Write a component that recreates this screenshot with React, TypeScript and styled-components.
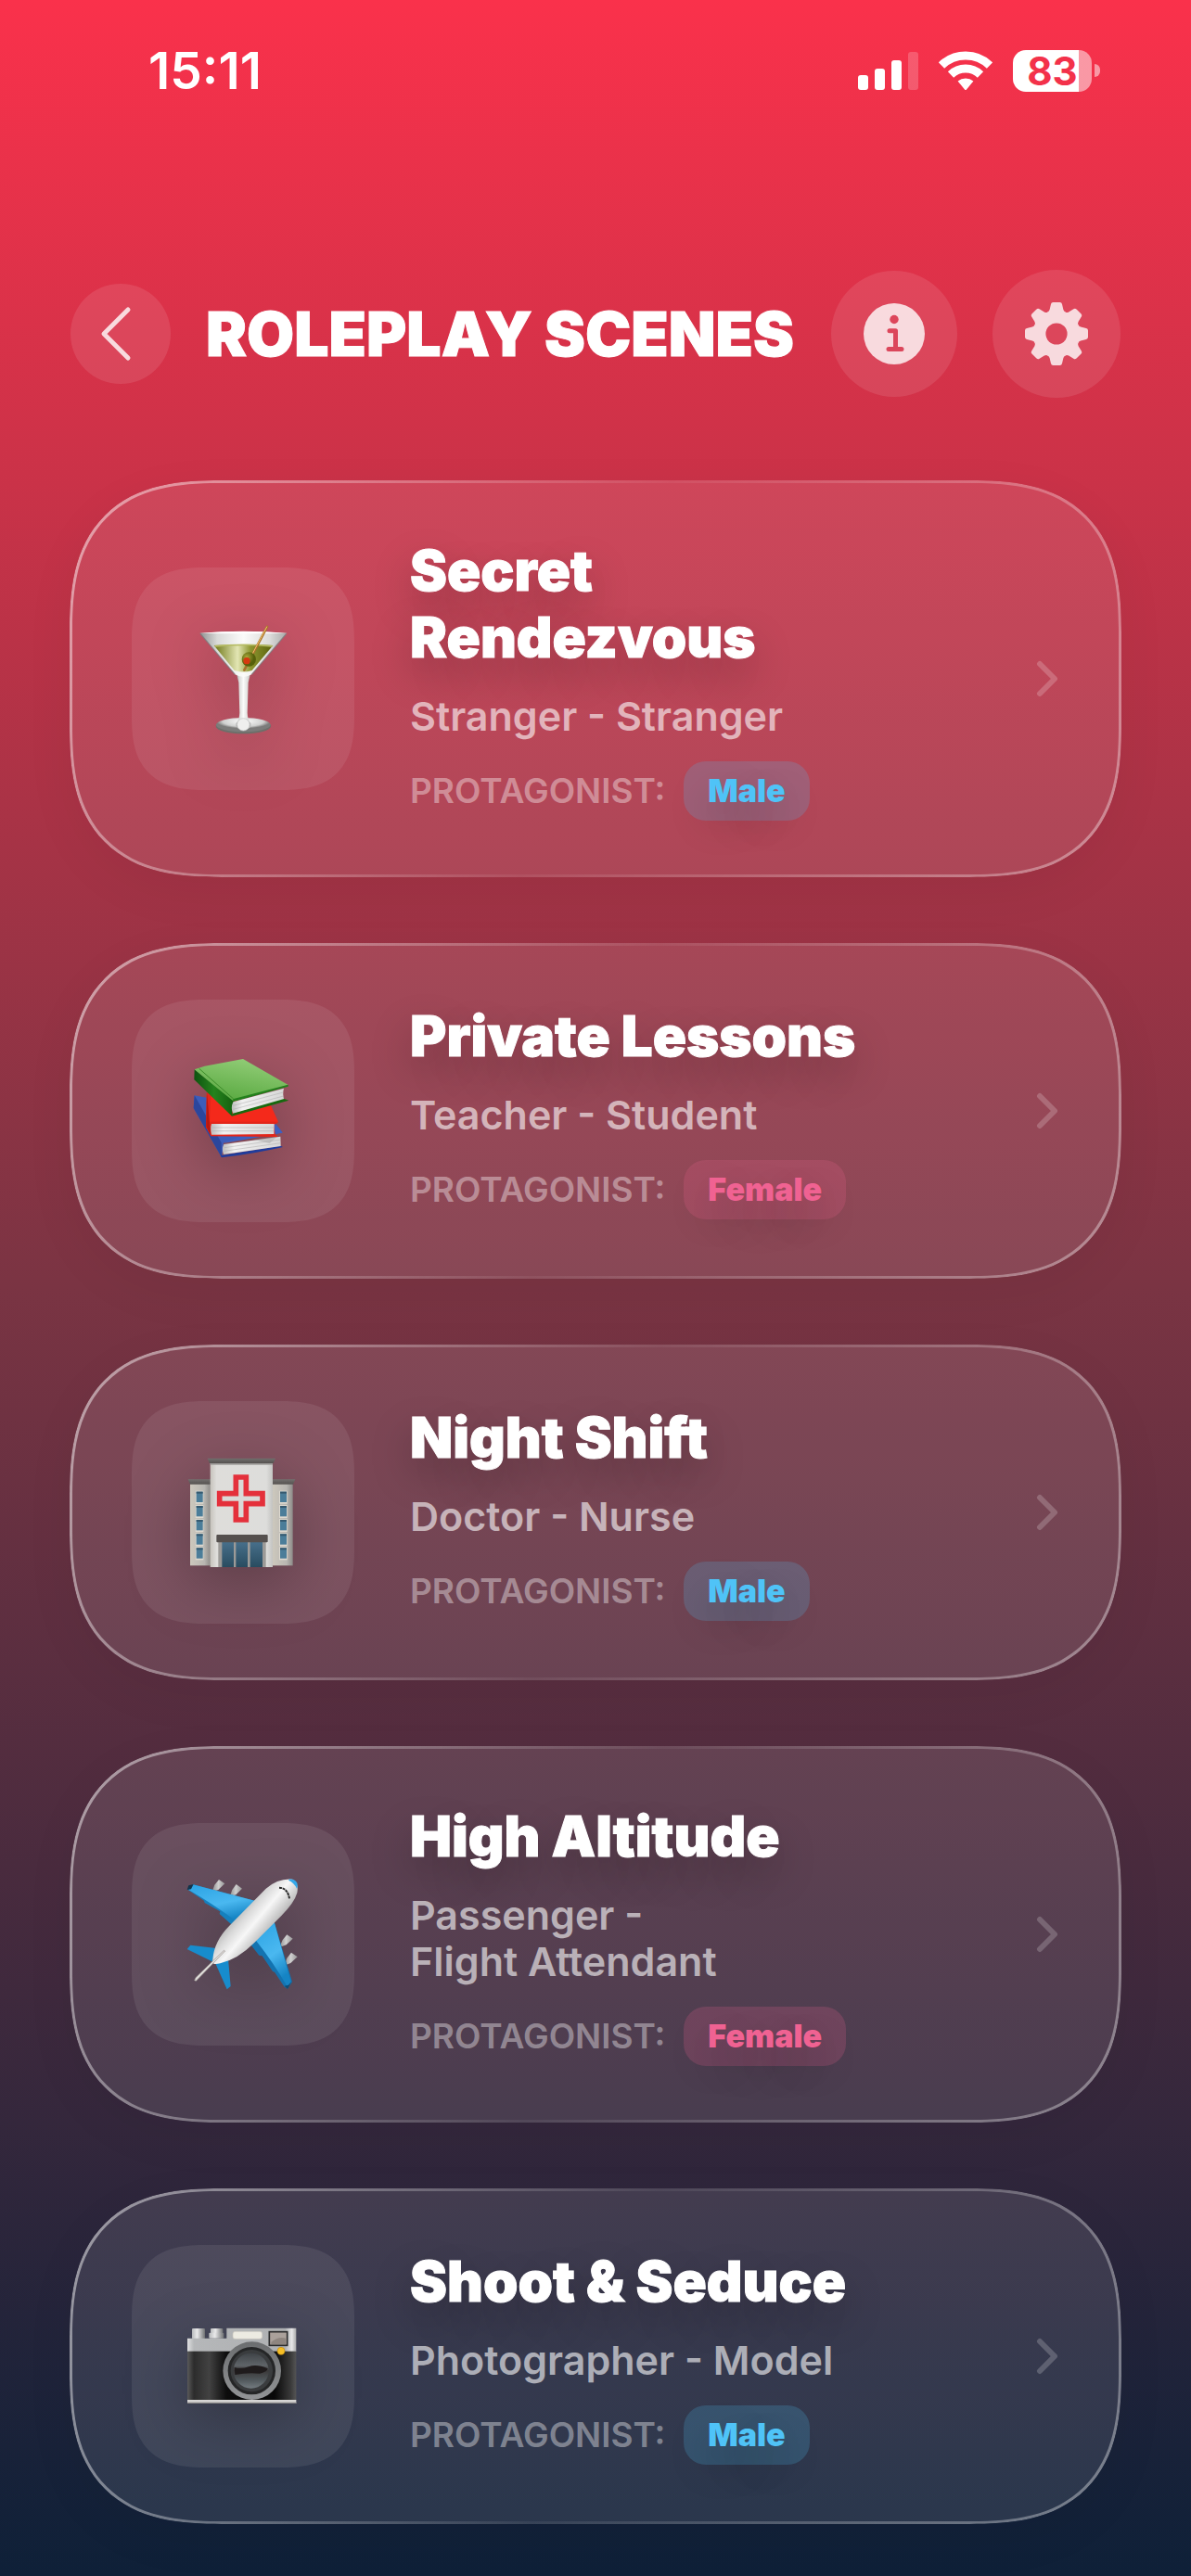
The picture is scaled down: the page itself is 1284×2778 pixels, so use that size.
import React from "react";
import styled, { createGlobalStyle, css } from "styled-components";

const GlobalStyle = createGlobalStyle`
  *, *::before, *::after { box-sizing: border-box; }
  body {
    margin: 0;
    background: #0f2038;
  }
  button {
    font: inherit;
    color: inherit;
    border: 0;
    padding: 0;
    margin: 0;
    cursor: pointer;
  }
`;

const Page = styled.div`
  min-height: 100vh;
  color: #fff;
  font-family: Inter, "Liberation Sans", sans-serif;
  background: linear-gradient(180deg, #fa314b 0%, #7a3443 50%, #0e2038 100%);
`;

/* ---------- status bar ---------- */

const StatusBar = styled.div`
  display: flex;
  align-items: center;
  justify-content: space-between;
  height: 152px;
  padding: 0 98px 0 160px;
`;

const Clock = styled.time`
  font-size: 55px;
  line-height: 64px;
  font-weight: 600;
`;

const StatusIcons = styled.div`
  display: flex;
  align-items: center;
  gap: 22px;
`;

const Battery = styled.div`
  display: flex;
  align-items: center;
  gap: 3px;
`;

const BatteryLevel = styled.div`
  width: 85px;
  height: 45px;
  border-radius: 14px;
  background: linear-gradient(90deg, #fff 83%, rgba(255, 255, 255, 0.5) 83%);
  color: #f3314a;
  font-size: 42px;
  line-height: 45px;
  font-weight: 700;
  text-align: center;
`;

const BatteryTip = styled.div`
  width: 6px;
  height: 14px;
  border-radius: 0 6px 6px 0;
  background: rgba(255, 255, 255, 0.5);
`;

/* ---------- header ---------- */

const Header = styled.header`
  display: flex;
  align-items: center;
  gap: 38px;
  height: 138px;
  margin: 139px 76px 89px;
`;

const RoundButton = styled.button<{ $size: number }>`
  flex: none;
  display: grid;
  place-items: center;
  width: ${(p) => p.$size}px;
  height: ${(p) => p.$size}px;
  border-radius: 50%;
  background: rgba(255, 255, 255, 0.1);
`;

const heavy = css`
  font-weight: 900;
  -webkit-text-stroke: 1px #fff;
`;

const Title = styled.h1`
  ${heavy}
  flex: 1;
  margin: 0;
  font-size: 66px;
  line-height: 76px;
  white-space: nowrap;
`;

/* ---------- scene list ---------- */

const SceneList = styled.ul`
  list-style: none;
  display: flex;
  flex-direction: column;
  gap: 71px;
  margin: 0;
  padding: 0 75px 55px;
`;

const Card = styled.button`
  position: relative;
  display: flex;
  align-items: center;
  width: 100%;
  padding: 61px 68px 61px 67px;
  border-radius: 136px;
  background: rgba(255, 255, 255, 0.1);
  box-shadow: 0 16px 56px rgba(0, 0, 0, 0.05);
  text-align: left;

  &::after {
    content: "";
    position: absolute;
    inset: 0;
    padding: 3px;
    border-radius: inherit;
    background: linear-gradient(
      111deg,
      rgba(255, 255, 255, 0.5),
      rgba(255, 255, 255, 0.06) 50%,
      rgba(255, 255, 255, 0.38)
    );
    mask: linear-gradient(#000 0 0) content-box exclude, linear-gradient(#000 0 0);
    pointer-events: none;
  }

  @supports (corner-shape: superellipse(1.4)) {
    &,
    &::after {
      border-radius: 164px;
      corner-shape: superellipse(1.4);
    }
  }
`;

const Picture = styled.span`
  flex: none;
  width: 240px;
  height: 240px;
  border-radius: 66px;
  background: rgba(255, 255, 255, 0.08);

  svg {
    display: block;
    width: 240px;
    height: 240px;
    filter: drop-shadow(0 18px 32px rgba(0, 0, 0, 0.25));
  }

  @supports (corner-shape: superellipse(1.4)) {
    border-radius: 80px;
    corner-shape: superellipse(1.4);
  }
`;

const Details = styled.span`
  display: flex;
  flex-direction: column;
  gap: 24px;
  width: 540px;
  margin: 0 auto 0 60px;
`;

const SceneName = styled.span`
  ${heavy}
  font-size: 60px;
  line-height: 72px;
  text-shadow: 0 18px 44px rgba(0, 0, 0, 0.25);
`;

const Roles = styled.span`
  font-size: 43px;
  line-height: 50px;
  font-weight: 600;
  color: rgba(255, 255, 255, 0.6);
`;

const LeadRow = styled.span`
  display: flex;
  align-items: center;
  gap: 20px;
`;

const LeadLabel = styled.span`
  font-size: 37px;
  line-height: 44px;
  font-weight: 600;
  color: rgba(255, 255, 255, 0.4);
`;

const LeadBadge = styled.span<{ $rgb: string }>`
  padding: 0 26px;
  border-radius: 24px;
  font-size: 34px;
  line-height: 64px;
  font-weight: 900;
  color: rgb(${(p) => p.$rgb});
  background: rgba(${(p) => p.$rgb}, 0.2);
  text-shadow: 0 18px 44px rgba(0, 0, 0, 0.25);
`;

/* ---------- drawings ---------- */

const SignalIcon = () => (
  <svg width="65" height="41" viewBox="0 0 65 41" fill="#fff" aria-hidden="true">
    <rect x="0" y="25" width="11" height="16" rx="3" />
    <rect x="18" y="18" width="11" height="23" rx="3" />
    <rect x="36" y="9" width="11" height="32" rx="3" />
    <rect x="54" y="0" width="11" height="41" rx="3" opacity="0.2" />
  </svg>
);

const WifiIcon = () => (
  <svg width="58" height="43" viewBox="-29 -42 58 43" aria-hidden="true">
    <g fill="none" stroke="#fff" strokeWidth="9">
      <path d="M-26 -26.5A37.5 37.5 0 0 1 26 -26.5" />
      <path d="M-16 -16.4A23 23 0 0 1 16 -16.4" />
    </g>
    <path
      d="M-8.4 -9.4A13 13 0 0 1 8.4 -9.4L1 -.6Q0 .4 -1 -.6Z"
      fill="#fff"
    />
  </svg>
);

const BackIcon = () => (
  <svg width="108" height="108" viewBox="0 0 108 108" aria-hidden="true">
    <path
      d="M62 28L36 54L62 80"
      fill="none"
      stroke="#fff"
      strokeOpacity="0.8"
      strokeWidth="5"
      strokeLinecap="round"
      strokeLinejoin="round"
    />
  </svg>
);

const InfoIcon = () => (
  <svg width="66" height="66" viewBox="0 0 66 66" aria-hidden="true">
    <mask id="info-cut">
      <rect width="66" height="66" fill="#fff" />
      <circle cx="33" cy="17.5" r="4.7" fill="#000" />
      <path
        d="M28 29.7H34.5V49M27 49.5H41"
        fill="none"
        stroke="#000"
        strokeWidth="5"
        strokeLinecap="round"
        strokeLinejoin="round"
      />
    </mask>
    <circle cx="33" cy="33" r="33" fill="#fff" fillOpacity="0.8" mask="url(#info-cut)" />
  </svg>
);

const GearIcon = () => (
  <svg width="68" height="68" viewBox="-34 -34 68 68" aria-hidden="true">
    <mask id="gear-cut">
      <rect x="-34" y="-34" width="68" height="68" fill="#fff" />
      <circle r="11.6" fill="#000" />
    </mask>
    <g fill="#fff" opacity="0.8" mask="url(#gear-cut)">
      <circle r="24.6" />
      {[0, 45, 90, 135, 180, 225, 270, 315].map((turn) => (
        <path
          key={turn}
          transform={`rotate(${turn})`}
          d="M-3.6 -34H3.6Q5.6 -34 6 -32L7.4 -26Q8 -23.8 10.4 -23L0 -18L-10.4 -23Q-8 -23.8 -7.4 -26L-6 -32Q-5.6 -34 -3.6 -34Z"
        />
      ))}
    </g>
  </svg>
);

const ChevronIcon = () => (
  <svg width="24" height="40" viewBox="0 0 24 40" aria-hidden="true">
    <path
      d="M4 4L20 20L4 36"
      fill="none"
      stroke="#fff"
      strokeOpacity="0.2"
      strokeWidth="6"
      strokeLinecap="round"
      strokeLinejoin="round"
    />
  </svg>
);

const Martini = () => (
  <svg viewBox="0 0 720 720" aria-hidden="true">
    <defs>
      <linearGradient id="m-glass" x1="0" x2="1">
        <stop offset="0" stopColor="#8f9090" />
        <stop offset=".2" stopColor="#d9dad8" />
        <stop offset=".5" stopColor="#fbfbfa" />
        <stop offset=".8" stopColor="#dcdcda" />
        <stop offset="1" stopColor="#a9a9a8" />
      </linearGradient>
      <linearGradient id="m-drink" x1="0" x2="1">
        <stop offset="0" stopColor="#6c7514" />
        <stop offset=".4" stopColor="#e3e6b4" />
        <stop offset=".62" stopColor="#8d9630" />
        <stop offset="1" stopColor="#59610c" />
      </linearGradient>
      <radialGradient id="m-base" cy=".25">
        <stop offset="0" stopColor="#fff" />
        <stop offset=".75" stopColor="#cfd0cf" />
        <stop offset="1" stopColor="#7c7c7b" />
      </radialGradient>
      <radialGradient id="m-olive" cx=".35" cy=".35">
        <stop offset="0" stopColor="#a9aa3c" />
        <stop offset="1" stopColor="#56600b" />
      </radialGradient>
    </defs>
    <ellipse cx="361" cy="513" rx="89" ry="25" fill="#6d6f6a" />
    <ellipse cx="361" cy="509" rx="88" ry="23" fill="url(#m-base)" />
    <path
      d="M338 340L346 372L349 470Q348 494 338 504Q335 524 361 526Q388 524 385 504Q375 494 374 470L377 372L385 340Z"
      fill="url(#m-glass)"
    />
    <circle cx="361" cy="508" r="20" fill="#efefee" stroke="#c6c6c5" strokeWidth="2" />
    <path d="M220 212Q361 202 502 212L388 346Q361 362 334 346Z" fill="url(#m-glass)" />
    <path d="M266 252Q361 244 457 252L389 333Q361 342 332 333Z" fill="url(#m-drink)" />
    <path d="M267 252Q361 244 457 252L453 257Q361 249 271 257Z" fill="#b5bb62" />
    <path d="M222 214L334 346M500 214L388 346" stroke="#77797c" strokeWidth="4" opacity=".7" />
    <path d="M220 212Q361 200 502 212Q361 216 220 212Z" fill="#fff" />
    <path d="M438 192L364 332" stroke="#a8722c" strokeWidth="8" strokeLinecap="round" />
    <path d="M437 192L374 310" stroke="#f1c269" strokeWidth="3" strokeLinecap="round" />
    <circle cx="379" cy="297" r="23" fill="url(#m-olive)" />
    <circle cx="372" cy="302" r="11" fill="#d5390f" />
  </svg>
);

const Books = () => (
  <svg viewBox="6 57 720 720" aria-hidden="true">
    <defs>
      <linearGradient id="b-green" x1=".7" x2=".3" y1="0" y2="1">
        <stop offset="0" stopColor="#93cd78" />
        <stop offset="1" stopColor="#58a940" />
      </linearGradient>
      <linearGradient id="b-spine" x1="0" x2="1">
        <stop offset="0" stopColor="#0e5310" />
        <stop offset=".5" stopColor="#25831d" />
        <stop offset="1" stopColor="#14600f" />
      </linearGradient>
      <linearGradient id="b-page" x1="0" x2="1">
        <stop offset="0" stopColor="#bdbdbd" />
        <stop offset=".2" stopColor="#f1f1f1" />
        <stop offset="1" stopColor="#d7d7d7" />
      </linearGradient>
    </defs>
    <path d="M209 367L206 408L297 568L303 520L494 487L465 450L380 400Z" fill="#3c5dba" />
    <path d="M209 367L206 408L297 568L296 520Z" fill="#2b469c" />
    <path d="M297 568L294 561L488 530L495 534Q400 556 297 568Z" fill="#1f3c9c" />
    <path d="M301 522L494 488L466 455Z" fill="#3f60bf" />
    <path d="M304 525L487 500L488 531L303 558Q296 540 304 525Z" fill="url(#b-page)" />
    <path d="M400 510L476 500L452 522Z" fill="#999" opacity=".4" />
    <path d="M248 358L246 470L262 499L478 501L470 493L466 462L479 455L455 398L330 380Z" fill="#e3261a" />
    <path d="M249 358L247 468L262 496L258 455Z" fill="#b9180f" />
    <path d="M258 452L480 452L456 400L330 420L262 368Z" fill="#f4291b" />
    <path d="M264 459L467 459L466 492L264 494Q259 474 264 459Z" fill="url(#b-page)" />
    <path d="M209 283L208 316L330 434L336 384Z" fill="url(#b-spine)" />
    <path d="M209 283L242 272L366 249L512 333L333 384Q265 330 209 283Z" fill="url(#b-green)" />
    <path d="M224 280L335 378" stroke="#3c8b29" strokeWidth="3" />
    <path d="M333 379L512 332L512 338L336 387Z" fill="#23801c" />
    <path d="M334 388L498 344Q493 362 499 382L334 426Q325 408 334 388Z" fill="url(#b-page)" />
    <path d="M330 434L331 426L499 378L514 383Z" fill="#17690f" />
    <path
      d="M334 400L496 357M334 412L497 369M266 471H465M266 482H465M306 536L487 510M305 547L488 521"
      stroke="#aaa"
      strokeWidth="1.5"
    />
  </svg>
);

const Hospital = () => (
  <svg viewBox="6 36 720 720" aria-hidden="true">
    <defs>
      <linearGradient id="h-wall" x1="0" x2="1">
        <stop offset="0" stopColor="#c6c3bc" />
        <stop offset=".1" stopColor="#deddda" />
        <stop offset=".9" stopColor="#dddddb" />
        <stop offset="1" stopColor="#c3c3c1" />
      </linearGradient>
      <linearGradient id="h-wing" x1="0" x2="1">
        <stop offset="0" stopColor="#cdc8bd" />
        <stop offset=".7" stopColor="#b8b6b1" />
        <stop offset="1" stopColor="#8d8b88" />
      </linearGradient>
      <linearGradient id="h-roof" x1="0" x2="0" y1="0" y2="1">
        <stop offset="0" stopColor="#72706e" />
        <stop offset="1" stopColor="#555250" />
      </linearGradient>
      <linearGradient id="h-door" x1="0" x2="0" y1="0" y2="1">
        <stop offset="0" stopColor="#476f8a" />
        <stop offset="1" stopColor="#294c60" />
      </linearGradient>
    </defs>
    <rect x="195" y="298" width="66" height="270" fill="url(#h-wing)" />
    <rect x="461" y="298" width="66" height="270" fill="url(#h-wing)" />
    <path d="M188 289H261V305H195ZM461 289H535L528 305H461Z" fill="url(#h-roof)" />
    <rect x="260" y="232" width="202" height="341" fill="url(#h-wall)" />
    <rect x="260" y="234" width="202" height="8" fill="#9a9896" />
    <path d="M251 221H471L464 237H258Z" fill="url(#h-roof)" />
    {[329, 375, 420, 466, 511].map((y) => (
      <g key={y}>
        <rect x="212" y={y - 3} width="26" height="42" fill="#dcd8cf" />
        <rect x="483" y={y - 3} width="26" height="42" fill="#dcd8cf" />
        <rect x="215" y={y} width="21" height="34" fill="#4b7d99" />
        <rect x="486" y={y} width="21" height="34" fill="#4b7d99" />
        <rect x="215" y={y} width="21" height="6" fill="#365a70" />
        <rect x="486" y={y} width="21" height="6" fill="#365a70" />
      </g>
    ))}
    <path
      d="M343 282H376V335H429V368H376V420H343V368H290V335H343Z"
      fill="#d9d9d7"
      stroke="#e4303b"
      strokeWidth="17"
    />
    <rect x="286" y="490" width="154" height="83" fill="#9c9a97" />
    <rect x="298" y="492" width="38" height="81" fill="url(#h-door)" />
    <rect x="343" y="492" width="38" height="81" fill="url(#h-door)" />
    <rect x="389" y="492" width="40" height="81" fill="url(#h-door)" />
    <rect x="280" y="468" width="166" height="25" rx="3" fill="#55504e" />
  </svg>
);

const Plane = () => (
  <svg viewBox="6 18 720 720" aria-hidden="true">
    <defs>
      <linearGradient id="p-body" x1=".25" x2=".75" y1=".3" y2=".72">
        <stop offset="0" stopColor="#9d9d9d" />
        <stop offset=".3" stopColor="#dadada" />
        <stop offset=".5" stopColor="#f7f7f7" />
        <stop offset=".75" stopColor="#c4c4c4" />
        <stop offset="1" stopColor="#808080" />
      </linearGradient>
      <linearGradient id="p-wing" x1="0" x2=".4" y1="0" y2="1">
        <stop offset="0" stopColor="#2ba3e4" />
        <stop offset=".6" stopColor="#4ab8f0" />
        <stop offset="1" stopColor="#1584c4" />
      </linearGradient>
      <linearGradient id="p-pod" x1="0" x2="1">
        <stop offset="0" stopColor="#8f8f8f" />
        <stop offset=".5" stopColor="#cfcfcf" />
        <stop offset="1" stopColor="#969696" />
      </linearGradient>
    </defs>
    <g fill="url(#p-pod)">
      <path d="M288 201L307 214L286 234L266 240L274 218Z" />
      <path d="M344 216L363 230L343 250L323 256L331 234Z" />
      <path d="M508 379L527 392L506 412L484 420L494 396Z" />
      <path d="M522 437L542 451L520 471L499 479L508 455Z" />
    </g>
    <path d="M204 217L406 270L345 350L330 347L290 312L292 304L242 276L240 269L185 232Z" fill="#1680bd" />
    <path d="M204 217L406 270L350 340Q270 280 190 234Z" fill="url(#p-wing)" />
    <path d="M185 234L190 220L206 216L198 232Z" fill="#14344a" />
    <path d="M467 338L525 532L510 554L500 548L468 500L462 498L428 448L418 446L390 410Z" fill="#1373b0" />
    <path d="M467 338L522 535L509 547Q465 470 408 398Z" fill="url(#p-wing)" />
    <path d="M525 528L510 555L500 545L513 542Z" fill="#0f4c74" />
    <path d="M185 426L196 413L280 423L266 466Z" fill="#178ccd" />
    <path d="M276 470L318 458L326 546L314 556Z" fill="#178ccd" />
    <path
      d="M526 200Q547 212 541 244Q532 276 490 318L402 406Q348 460 292 472Q262 480 268 460Q272 400 322 350L440 230Q480 196 526 200Z"
      fill="url(#p-body)"
    />
    <path d="M514 200Q533 198 541 212Q544 222 540 230Q530 210 514 204Z" fill="#35a8ea" />
    <path d="M483 227Q510 228 516 262" fill="none" stroke="#292929" strokeWidth="6" strokeDasharray="9 2" />
    <path d="M308 432L214 529L209 527L213 518L304 430Z" fill="#e0dedb" stroke="#9b9491" strokeWidth="2" />
  </svg>
);

const Camera = () => (
  <svg viewBox="6 36 720 720" aria-hidden="true">
    <defs>
      <linearGradient id="c-top" x1="0" x2="1">
        <stop offset="0" stopColor="#dfe0e1" />
        <stop offset=".06" stopColor="#b5b7b9" />
        <stop offset=".9" stopColor="#aeb0b2" />
        <stop offset=".96" stopColor="#e6e6e7" />
        <stop offset="1" stopColor="#a9a9aa" />
      </linearGradient>
      <linearGradient id="c-body" x1="0" x2="1">
        <stop offset="0" stopColor="#5a5a5a" />
        <stop offset=".06" stopColor="#2c2c2c" />
        <stop offset=".2" stopColor="#424242" />
        <stop offset=".36" stopColor="#0c0c0c" />
        <stop offset=".8" stopColor="#080808" />
        <stop offset=".95" stopColor="#3a3a3a" />
        <stop offset="1" stopColor="#555" />
      </linearGradient>
      <linearGradient id="c-knob" x1="0" x2="1">
        <stop offset="0" stopColor="#b9bbbd" />
        <stop offset=".4" stopColor="#e9e9ea" />
        <stop offset="1" stopColor="#6f7173" />
      </linearGradient>
      <linearGradient id="c-ring" x1="0" x2="0" y1="0" y2="1">
        <stop offset="0" stopColor="#6b6d6f" />
        <stop offset="1" stopColor="#929496" />
      </linearGradient>
      <linearGradient id="c-lens" x1="0" x2="0" y1="0" y2="1">
        <stop offset="0" stopColor="#3f4347" />
        <stop offset=".35" stopColor="#5f6468" />
        <stop offset=".5" stopColor="#3a3839" />
        <stop offset=".75" stopColor="#4f565a" />
        <stop offset="1" stopColor="#737b80" />
      </linearGradient>
    </defs>
    <rect x="201" y="306" width="42" height="34" rx="3" fill="url(#c-knob)" />
    <rect x="261" y="306" width="40" height="16" rx="3" fill="url(#c-knob)" />
    <rect x="256" y="320" width="48" height="18" rx="3" fill="url(#c-knob)" />
    <path d="M186 338H313V305H538V382H186Z" fill="url(#c-top)" />
    <rect x="186" y="380" width="352" height="160" fill="url(#c-body)" />
    <rect x="186" y="537" width="352" height="12" fill="#d5d4d3" />
    <rect x="186" y="545" width="352" height="4" fill="#8b8a89" />
    <rect x="333" y="316" width="95" height="24" rx="8" fill="#edebe2" stroke="#c8c6bd" strokeWidth="2" />
    <rect x="451" y="317" width="58" height="44" fill="#aaa19b" stroke="#2b2c2d" strokeWidth="5" />
    <path d="M457 350Q480 330 505 338V357H457Z" fill="#8e857f" />
    <circle cx="395" cy="443" r="94" fill="url(#c-ring)" />
    <circle cx="394" cy="443" r="77" fill="#252627" />
    <circle cx="394" cy="443" r="68" fill="#3a3c3e" />
    <circle cx="392" cy="443" r="57" fill="url(#c-lens)" />
    <path d="M338 432Q362 438 384 430Q410 420 446 436Q446 446 420 452Q380 448 340 456Z" fill="#1f1b1c" />
    <circle cx="489" cy="379" r="12" fill="#f5be25" stroke="#b98512" strokeWidth="2" />
  </svg>
);

/* ---------- data ---------- */

type Scene = {
  name: string;
  roles: string;
  lead: "Male" | "Female";
  Art: () => React.JSX.Element;
};

const leadColours = { Male: "79, 195, 247", Female: "240, 98, 146" };

const scenes: Scene[] = [
  { name: "Secret Rendezvous", roles: "Stranger - Stranger", lead: "Male", Art: Martini },
  { name: "Private Lessons", roles: "Teacher - Student", lead: "Female", Art: Books },
  { name: "Night Shift", roles: "Doctor - Nurse", lead: "Male", Art: Hospital },
  { name: "High Altitude", roles: "Passenger - Flight\u00a0Attendant", lead: "Female", Art: Plane },
  { name: "Shoot & Seduce", roles: "Photographer - Model", lead: "Male", Art: Camera },
];

const SceneCard = ({ name, roles, lead, Art }: Scene) => (
  <li>
    <Card type="button">
      <Picture>
        <Art />
      </Picture>
      <Details>
        <SceneName>{name}</SceneName>
        <Roles>{roles}</Roles>
        <LeadRow>
          <LeadLabel>PROTAGONIST:</LeadLabel>
          <LeadBadge $rgb={leadColours[lead]}>{lead}</LeadBadge>
        </LeadRow>
      </Details>
      <ChevronIcon />
    </Card>
  </li>
);

export default function App() {
  return (
    <Page>
      <GlobalStyle />
      <StatusBar>
        <Clock>15:11</Clock>
        <StatusIcons>
          <SignalIcon />
          <WifiIcon />
          <Battery>
            <BatteryLevel>83</BatteryLevel>
            <BatteryTip />
          </Battery>
        </StatusIcons>
      </StatusBar>
      <Header>
        <RoundButton type="button" $size={108} aria-label="Back">
          <BackIcon />
        </RoundButton>
        <Title>ROLEPLAY SCENES</Title>
        <RoundButton type="button" $size={136} aria-label="Information">
          <InfoIcon />
        </RoundButton>
        <RoundButton type="button" $size={138} aria-label="Settings">
          <GearIcon />
        </RoundButton>
      </Header>
      <SceneList>
        {scenes.map((scene) => (
          <SceneCard key={scene.name} {...scene} />
        ))}
      </SceneList>
    </Page>
  );
}
